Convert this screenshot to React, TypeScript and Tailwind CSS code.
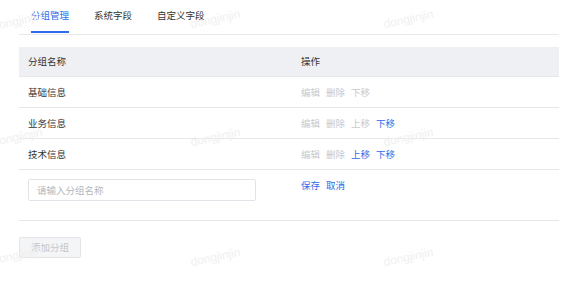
import { useState } from "react";

type Group = {
  name: string;
  canUp: boolean;
  canDown: boolean;
};

const tabs = ["分组管理", "系统字段", "自定义字段"];

const groups: Group[] = [
  { name: "基础信息", canUp: false, canDown: false },
  { name: "业务信息", canUp: false, canDown: true },
  { name: "技术信息", canUp: true, canDown: true },
];

const marks = [
  { left: -8, top: 12 },
  { left: 190, top: 10 },
  { left: 383, top: 10 },
  { left: -8, top: 128 },
  { left: 190, top: 128 },
  { left: 383, top: 128 },
  { left: -8, top: 246 },
  { left: 190, top: 248 },
  { left: 383, top: 248 },
];

function Action({ label, active }: { label: string; active: boolean }) {
  return (
    <span className={active ? "text-[#2f6bea] cursor-pointer" : "text-[#c6c9cf]"}>
      {label}
    </span>
  );
}

export default function App() {
  const [tab, setTab] = useState(0);

  return (
    <div
      className="relative w-[561px] h-[300px] overflow-hidden bg-white text-[9.5px] text-[#333]"
      style={{ fontFamily: '"Noto Sans CJK SC", "Noto Sans", sans-serif' }}
    >
      <div className="pl-[19px] pr-[2px]">
        {/* Tabs */}
        <div className="flex gap-[25px] pl-[12px] border-b border-[#e8e9ed] h-[35px]">
          {tabs.map((t, i) => (
            <button
              key={t}
              onClick={() => setTab(i)}
              className={
                "relative h-full flex items-center leading-none pb-[3px] " +
                (tab === i ? "text-[#2f6bea]" : "text-[#333]")
              }
            >
              {t}
              {tab === i && (
                <span className="absolute left-0 right-0 bottom-[1px] h-[2px] bg-[#2f6bea]" />
              )}
            </button>
          ))}
        </div>

        {/* Table */}
        <div className="mt-[12px]">
          <div className="grid grid-cols-[273px_1fr] h-[30px] bg-[#eff0f4] border-b border-[#e6e7eb] items-center">
            <div className="pl-[9px]">分组名称</div>
            <div className="pl-[9px]">操作</div>
          </div>

          {groups.map((g) => (
            <div
              key={g.name}
              className="grid grid-cols-[273px_1fr] h-[31px] border-b border-[#e6e7eb] items-center"
            >
              <div className="pl-[9px]">{g.name}</div>
              <div className="pl-[9px] flex gap-[6px]">
                <Action label="编辑" active={false} />
                <Action label="删除" active={false} />
                {g.canDown && <Action label="上移" active={g.canUp} />}
                <Action label="下移" active={g.canDown} />
              </div>
            </div>
          ))}

          <div className="grid grid-cols-[273px_1fr] h-[51px] border-b border-[#e6e7eb]">
            <div className="pl-[9px] pt-[9px]">
              <input
                placeholder="请输入分组名称"
                className="w-[228px] h-[22px] px-[8px] border border-[#e1e3e8] rounded-[2px] outline-none placeholder:text-[#b4b7bd]"
              />
            </div>
            <div className="pl-[9px] pt-[11px] flex gap-[6px] leading-none">
              <Action label="保存" active />
              <Action label="取消" active />
            </div>
          </div>
        </div>

        <button className="mt-[16px] w-[62px] h-[21px] bg-[#f4f5f7] border border-[#e3e4e8] rounded-[2px] text-[#c3c6cc]">
          添加分组
        </button>
      </div>

      {/* watermark */}
      {marks.map((m, i) => (
        <span
          key={i}
          className="absolute pointer-events-none text-[12px] text-[#f0f0f0] -rotate-12"
          style={{ left: m.left, top: m.top, fontFamily: '"Liberation Sans", sans-serif' }}
        >
          dongjinjin
        </span>
      ))}
    </div>
  );
}
